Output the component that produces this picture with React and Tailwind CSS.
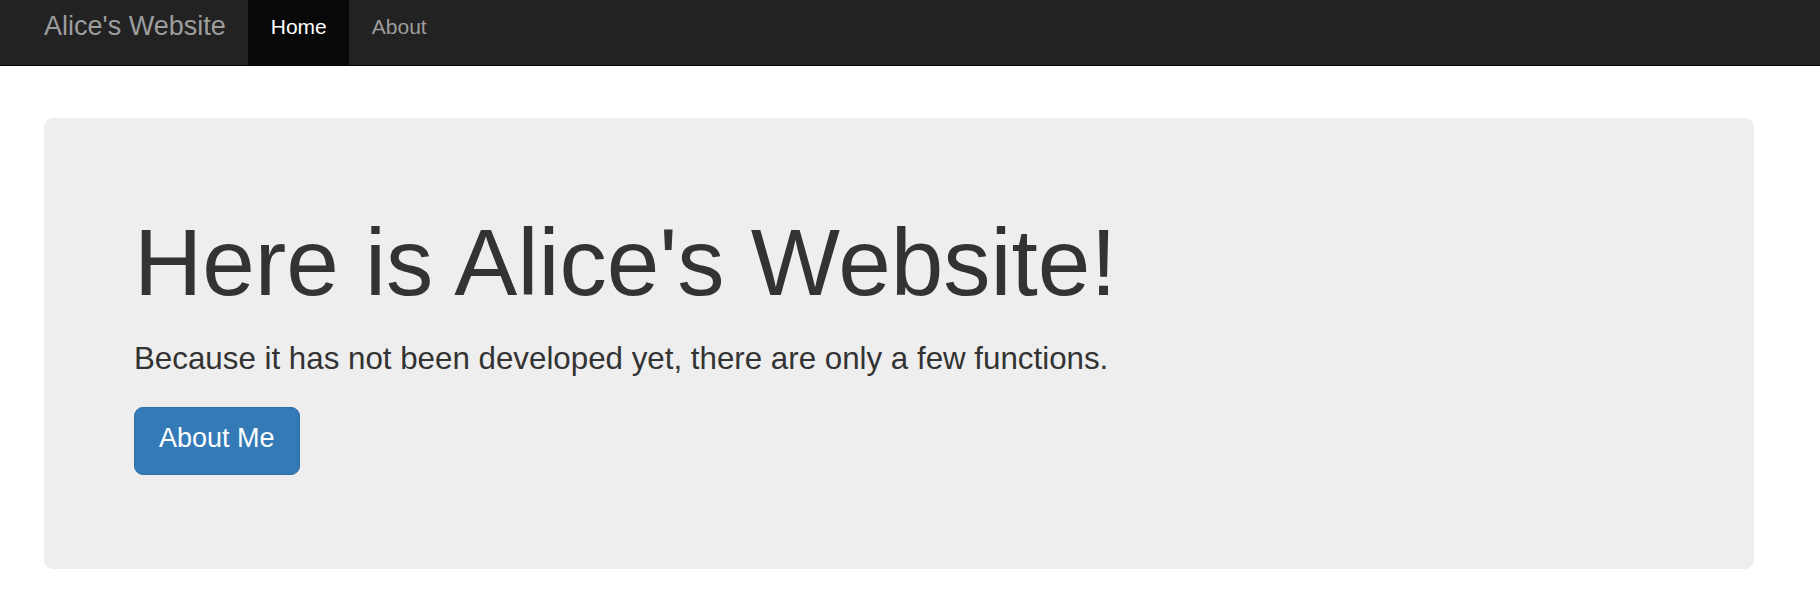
import React from 'react';

function Navbar() {
  const links = [
    { label: "Home", active: true },
    { label: "About", active: false },
  ];

  return (
    <nav className="h-[66px] bg-[#222222] border-b border-[#080808]">
      <div className="flex h-full pl-[21.5px]">
        <a href="#" className="px-[22.5px] pt-[11px] text-[27px] leading-[30px] text-[#9d9d9d]">
          Alice's Website
        </a>
        <ul className="flex h-full">
          {links.map((link) => (
            <li key={link.label} className="h-full">
              <a
                href="#"
                className={
                  link.active
                    ? "block h-full px-[22.5px] pt-[12px] text-[21px] leading-[30px] bg-[#080808] text-white"
                    : "block h-full px-[22.5px] pt-[12px] text-[21px] leading-[30px] text-[#9d9d9d]"
                }
              >
                {link.label}
              </a>
            </li>
          ))}
        </ul>
      </div>
    </nav>
  );
}

export default function App() {
  return (
    <div className="min-h-[606px] bg-white text-[#333333] font-['Liberation_Sans',Arial,sans-serif]">
      <Navbar />

      {/* Jumbotron */}
      <div className="ml-[44px] mt-[52px] w-[1710px] rounded-[9px] bg-[#eeeeee] pl-[90px] pr-[90px] pt-[92px] pb-[94px]">
        <h1 className="text-[94.5px] leading-[104px] font-normal">
          Here is Alice's Website!
        </h1>
        <p className="mt-[22px] text-[31.3px] leading-[45px]">
          Because it has not been developed yet, there are only a few functions.
        </p>
        <div className="mt-[26px] flex">
          <a
            href="#"
            className="inline-block rounded-[9px] border border-[#2e6da4] bg-[#337ab7] px-[24px] pt-[13px] pb-[18px] text-[27px] leading-[35px] text-white"
          >
            About Me
          </a>
        </div>
      </div>
    </div>
  );
}
